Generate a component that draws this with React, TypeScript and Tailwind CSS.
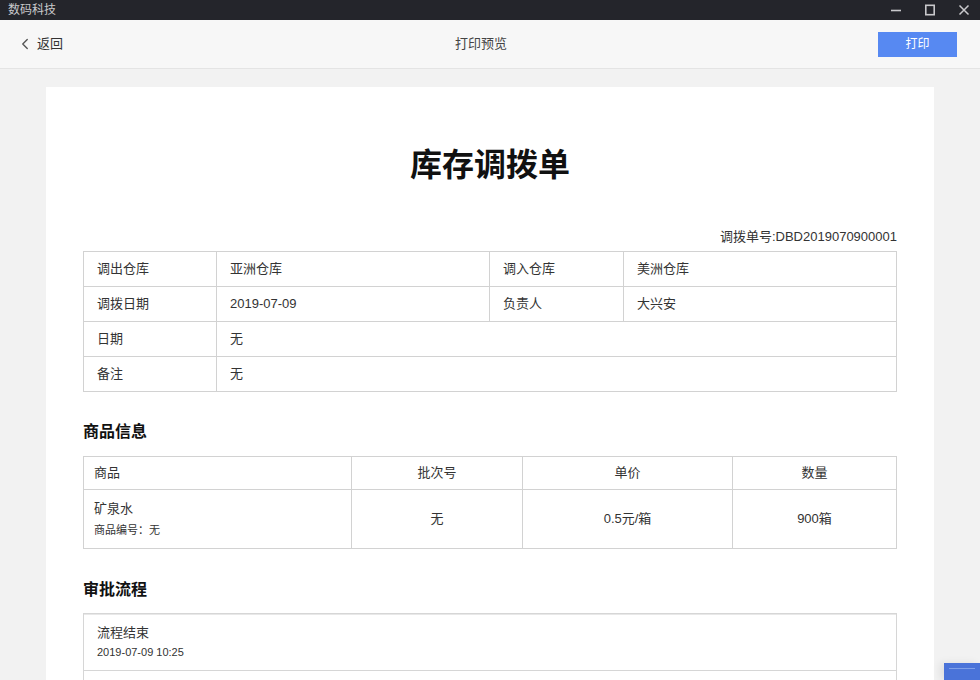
import { ChevronLeft } from 'lucide-react';

const FONT = { fontFamily: '"Liberation Sans", "Noto Sans CJK SC", sans-serif' };

const infoRows = [
    ['调出仓库', '亚洲仓库', '调入仓库', '美洲仓库'],
    ['调拨日期', '2019-07-09', '负责人', '大兴安'],
];

const cell = 'border-r border-b border-[#d2d2d2] flex items-center';
const pad = 'px-[13px]';

export default function App() {
    return (
        <div className="w-[980px] h-[680px] overflow-hidden flex flex-col bg-[#f2f2f2] text-[#333] relative" style={FONT}>
            {/* window title bar */}
            <div className="h-[20px] shrink-0 bg-[#24252b] flex items-center justify-between pl-[8px] pr-[10px]">
                <span className="text-[12px] text-[#c9c9cc] leading-none">数码科技</span>
                <div className="flex items-center gap-[22px]">
                    <svg width="12" height="12" viewBox="0 0 12 12"><path d="M1 6.5h10" stroke="#c9c9cc" strokeWidth="1.6" /></svg>
                    <svg width="12" height="12" viewBox="0 0 12 12"><rect x="1.8" y="1.3" width="8.4" height="9.4" fill="none" stroke="#c9c9cc" strokeWidth="1.6" /></svg>
                    <svg width="12" height="12" viewBox="0 0 12 12"><path d="M1.5 1.5l9 9M10.5 1.5l-9 9" stroke="#c9c9cc" strokeWidth="1.5" /></svg>
                </div>
            </div>

            {/* header */}
            <div className="h-[49px] shrink-0 bg-[#f7f7f7] border-b border-[#e4e4e4] relative flex items-center justify-between pl-[16px] pr-[23px]">
                <button className="flex items-center gap-[3px] text-[13px] text-[#333]">
                    <ChevronLeft className="w-[18px] h-[18px] text-[#555]" strokeWidth={1.8} />
                    <span>返回</span>
                </button>
                <span className="absolute left-[481px] -translate-x-1/2 text-[13px] text-[#444]">打印预览</span>
                <button className="w-[79px] h-[25px] bg-[#5789f2] text-white text-[12px] flex items-center justify-center">打印</button>
            </div>

            {/* paper */}
            <div className="flex-1 pt-[18px] px-[46px] min-h-0">
                <div className="bg-white h-full pt-[58px] px-[37px]">
                    <h1 className="text-center text-[32px] leading-[40px] font-bold text-[#111]">库存调拨单</h1>

                    <div className="mt-[42px] mb-[4px] text-right text-[13px] leading-[20px]">调拨单号:DBD2019070900001</div>

                    <div className="grid grid-cols-[133px_273px_134px_1fr] border-l border-t border-[#d2d2d2] text-[13px]">
                        {infoRows.map((row, i) =>
                            row.map((c, j) => (
                                <div key={`${i}-${j}`} className={`${cell} ${pad} h-[35px]`}>{c}</div>
                            ))
                        )}
                        <div className={`${cell} ${pad} h-[35px]`}>日期</div>
                        <div className={`${cell} ${pad} h-[35px] col-span-3`}>无</div>
                        <div className={`${cell} ${pad} h-[35px]`}>备注</div>
                        <div className={`${cell} ${pad} h-[35px] col-span-3`}>无</div>
                    </div>

                    <h2 className="mt-[28px] text-[16px] leading-[24px] font-bold text-[#111]">商品信息</h2>
                    <div className="mt-[12px] grid grid-cols-[268px_171px_210px_1fr] border-l border-t border-[#d2d2d2] text-[13px]">
                        <div className={`${cell} h-[33px] px-[10px]`}>商品</div>
                        <div className={`${cell} h-[33px] justify-center`}>批次号</div>
                        <div className={`${cell} h-[33px] justify-center`}>单价</div>
                        <div className={`${cell} h-[33px] justify-center`}>数量</div>
                        <div className="border-r border-b border-[#d2d2d2] h-[59px] px-[10px] pb-[1px] flex flex-col items-start justify-center gap-[4px]">
                            <span className="leading-[18px]">矿泉水</span>
                            <span className="text-[11px] leading-[16px]">商品编号：无</span>
                        </div>
                        <div className={`${cell} h-[59px] justify-center`}>无</div>
                        <div className={`${cell} h-[59px] justify-center`}>0.5元/箱</div>
                        <div className={`${cell} h-[59px] justify-center`}>900箱</div>
                    </div>

                    <h2 className="mt-[29px] text-[16px] leading-[24px] font-bold text-[#111]">审批流程</h2>
                    <div className="mt-[11px] border border-[#d6d6d6] shadow-[inset_0_1px_0_#e8e8e8]">
                        <div className="h-[57px] border-b border-[#d6d6d6] px-[13px] flex flex-col justify-center gap-[2px]">
                            <span className="text-[13px] leading-[18px]">流程结束</span>
                            <span className="text-[11px] leading-[16px]">2019-07-09 10:25</span>
                        </div>
                        <div className="h-[57px]" />
                    </div>
                </div>
            </div>

            {/* floating widget peeking at the bottom right */}
            <div className="absolute right-0 bottom-0 w-[36px] h-[17px] bg-[#4a73d9] shadow-[-4px_0_8px_rgba(0,0,0,0.08)] flex items-start justify-center pt-[5px]">
                <div className="w-[26px] h-[1px] bg-[#7f9fe8]" />
            </div>
        </div>
    );
}
